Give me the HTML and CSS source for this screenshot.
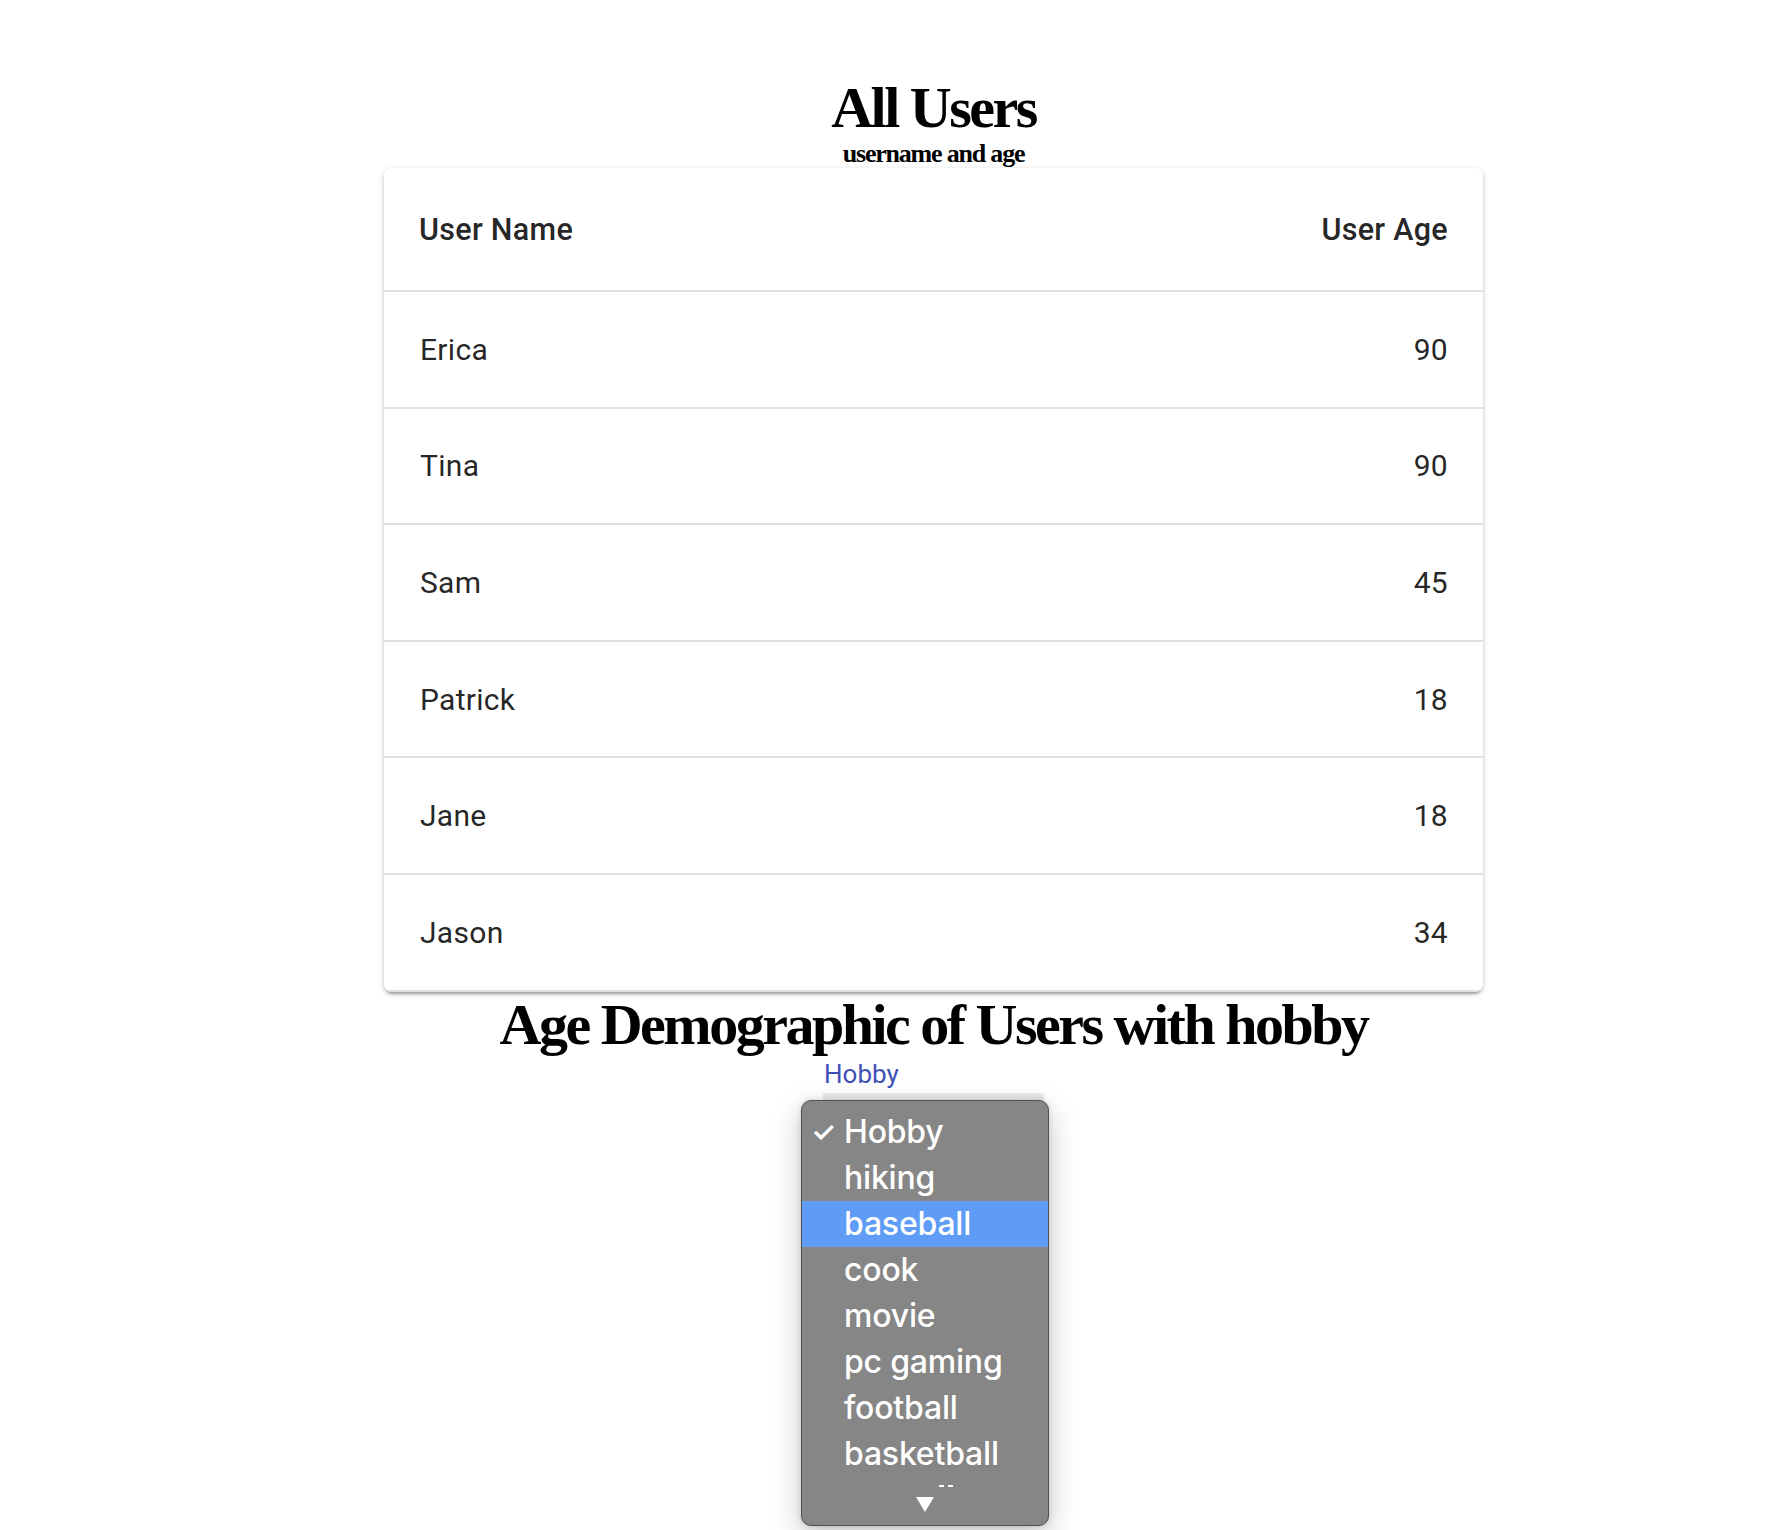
FILE: index.html
```html
<!DOCTYPE html>
<html lang="en">
<head>
<meta charset="utf-8">
<title>All Users</title>
<link rel="stylesheet" href="styles.css">
</head>
<body>
<div class="page">
  <h1 class="title">All Users</h1>
  <h5 class="subtitle">username and age</h5>
  <div class="card">
    <div class="row head">
      <span>User Name</span>
      <span>User Age</span>
    </div>
    <div class="row"><span>Erica</span><span>90</span></div>
    <div class="row"><span>Tina</span><span>90</span></div>
    <div class="row"><span>Sam</span><span>45</span></div>
    <div class="row"><span>Patrick</span><span>18</span></div>
    <div class="row"><span>Jane</span><span>18</span></div>
    <div class="row"><span>Jason</span><span>34</span></div>
  </div>
  <h2 class="title section">Age Demographic of Users with hobby</h2>
  <div class="field">
    <label class="field-label">Hobby</label>
    <div class="field-input"></div>
    <div class="popup">
      <div class="opt checked"><span class="check">✓</span>Hobby</div>
      <div class="opt">hiking</div>
      <div class="opt active">baseball</div>
      <div class="opt">cook</div>
      <div class="opt">movie</div>
      <div class="opt">pc gaming</div>
      <div class="opt">football</div>
      <div class="opt">basketball</div>
      <div class="opt-cut"><i></i><i></i></div>
      <div class="scroll-arrow"><svg width="18" height="15" viewBox="0 0 18 15"><path d="M0 0 H18 L9 15 Z" fill="#fff"/></svg></div>
    </div>
  </div>
</div>
</body>
</html>
```
FILE: styles.css
```css
html, body {
  margin: 0;
  padding: 0;
  background: #fff;
}
.page {
  padding-left: 75px;
  display: flex;
  flex-direction: column;
  align-items: center;
  min-height: 1530px;
  box-sizing: border-box;
}
.title {
  font-family: "Liberation Serif", "Times New Roman", serif;
  font-weight: bold;
  font-size: 58px;
  line-height: 60px;
  letter-spacing: -2.5px;
  margin: 78px 0 0;
  color: #000;
  text-align: center;
}
.subtitle {
  font-family: "Liberation Serif", "Times New Roman", serif;
  font-weight: bold;
  font-size: 26px;
  line-height: 26px;
  letter-spacing: -1.2px;
  margin: 3px 0 0;
  color: #000;
}
.card {
  width: 1099px;
  margin-top: 1px;
  background: #fff;
  border-radius: 8px;
  box-shadow: 0 4px 2px -2px rgba(0,0,0,0.2), 0 2px 4px 0 rgba(0,0,0,0.14), 0 2px 6px 0 rgba(0,0,0,0.12);
  font-family: Roboto, "Noto Sans", sans-serif;
  color: rgba(0,0,0,0.87);
  overflow: hidden;
}
.row {
  display: flex;
  justify-content: space-between;
  align-items: center;
  height: 114.6px;
  padding: 0 35px 0 36px;
  border-bottom: 2px solid #e0e0e0;
  font-size: 30px;
  font-weight: 400;
  letter-spacing: 0.3px;
}
.row.head {
  height: 122px;
  font-weight: 500;
  font-size: 30.5px;
  padding-left: 35px;
}
.section {
  margin-top: 3px;
  letter-spacing: -2.5px;
}
.field {
  position: relative;
  width: 221px;
  margin-top: 4px;
  font-family: Roboto, "Noto Sans", sans-serif;
}
.field-label {
  display: block;
  font-size: 26px;
  line-height: 30px;
  color: #3f51b5;
  padding-left: 1px;
}
.field-input {
  margin-top: 4px;
  height: 60px;
  background: #ebebeb;
}
.popup {
  position: absolute;
  left: -22px;
  top: 41px;
  width: 248px;
  height: 426px;
  box-sizing: border-box;
  padding-top: 8px;
  background: #868686;
  border: 1px solid #505050;
  border-radius: 10px;
  box-shadow: 0 10px 30px rgba(0,0,0,0.22), 0 0 6px rgba(0,0,0,0.14);
  font-family: Inter, "Noto Sans", sans-serif;
  color: #fff;
  overflow: hidden;
}
.opt {
  position: relative;
  height: 46px;
  line-height: 46px;
  padding-left: 42px;
  font-size: 32px;
  font-weight: 500;
  letter-spacing: -0.2px;
}
.opt.active {
  background: #5e9cf5;
}
.check {
  position: absolute;
  left: 9px;
  top: 0;
  font-size: 28px;
  font-weight: 600;
}
.opt-cut {
  height: 10px;
  padding: 8px 0 0 137px;
  box-sizing: border-box;
  display: flex;
  gap: 4px;
}
.opt-cut i {
  display: block;
  width: 5px;
  height: 2px;
  background: #fff;
}
.scroll-arrow {
  display: flex;
  justify-content: center;
  padding-top: 10px;
}
```
